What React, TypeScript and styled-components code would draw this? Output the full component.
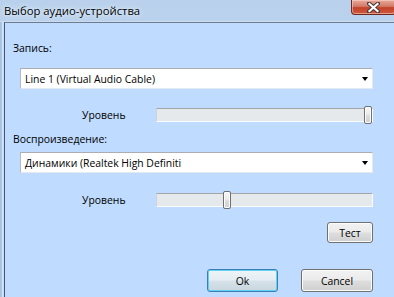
import styled, { createGlobalStyle } from "styled-components";

const GlobalStyle = createGlobalStyle`
  html, body {
    margin: 0;
    padding: 0;
    background: #bfdbff;
  }
  * {
    box-sizing: border-box;
  }
`;

const FONT = `"Open Sans", "Noto Sans", "Liberation Sans", sans-serif`;

const Window = styled.div`
  width: 394px;
  height: 297px;
  display: flex;
  flex-direction: column;
  overflow: hidden;
  background: linear-gradient(to bottom, #b9d1ec 0%, #c4daf1 100%);
  font-family: ${FONT};
`;

const TitleBar = styled.div`
  height: 22px;
  display: flex;
  justify-content: space-between;
  align-items: flex-start;
  border-bottom: 1px solid #c9dcf0;
`;

const Title = styled.div`
  margin: 3px 0 0 4px;
  font-size: 11.3px;
  line-height: 15px;
  color: #000;
  text-shadow: 0 0 6px #e8f2fc, 0 0 3px #e8f2fc;
`;

const CloseButton = styled.div`
  width: 45px;
  height: 15px;
  margin-right: -2px;
  display: flex;
  align-items: center;
  justify-content: center;
  border: 1px solid #6b2a22;
  border-top: none;
  border-radius: 0 0 4px 4px;
  background: linear-gradient(
    to bottom,
    #e9a99c 0%,
    #d47a68 45%,
    #c1412a 55%,
    #cf5a3c 100%
  );
  box-shadow: inset 0 0 0 1px rgba(255, 220, 210, 0.5);
`;

const Body = styled.div`
  flex: 1;
  display: flex;
`;

const FrameEdge = styled.div`
  width: 4px;
  flex-shrink: 0;
  background: linear-gradient(to right, #a5c2e4 0%, #a9c6e6 45%, #d3e5f8 55%, #c5dbf3 100%);
`;

const Client = styled.div`
  flex: 1;
  min-width: 0;
  display: flex;
  flex-direction: column;
  background: #bfdbff;
  border-left: 1px solid #44566f;
  border-top: 1px solid #6d7c8e;
  padding: 18px 21px 0 8px;
  font-size: 10.4px;
  color: #000;
`;

const GroupLabel = styled.div<{ $top: number }>`
  margin-top: ${(p) => p.$top}px;
  line-height: 14px;
  height: 14px;
`;

const Combo = styled.div<{ $top: number }>`
  margin: ${(p) => p.$top}px 0 0 7px;
  height: 21px;
  display: flex;
  align-items: center;
  justify-content: space-between;
  padding: 0 4px 0 4px;
  background: #fff;
  border: 1px solid;
  border-color: #abadb3 #e3e9ef #e3e9ef #b5bac2;
  line-height: 14px;
`;

const Arrow = styled.span`
  width: 0;
  height: 0;
  border-left: 3.5px solid transparent;
  border-right: 3.5px solid transparent;
  border-top: 4px solid #000;
`;

const SliderRow = styled.div<{ $top: number }>`
  margin: ${(p) => p.$top}px 0 0 7px;
  height: 18px;
  display: flex;
  align-items: center;
`;

const SliderLabel = styled.div`
  margin-left: 62px;
  width: 74px;
  line-height: 14px;
`;

const Track = styled.div`
  position: relative;
  width: 217px;
  height: 14px;
  background: #e6e9eb;
  border-top: 1px solid #a3a6a9;
  border-left: 1px solid #d0d3d6;
  border-bottom: 1px solid #fafcfe;
  border-right: 1px solid #fafcfe;
`;

const Thumb = styled.div<{ $pos: number }>`
  position: absolute;
  top: -3px;
  left: ${(p) => p.$pos}px;
  width: 8px;
  height: 18px;
  border: 1px solid #707070;
  border-radius: 2px;
  background: linear-gradient(to bottom, #f7f7f7 0%, #ececec 45%, #dcdcdc 55%, #d0d0d0 100%);
  box-shadow: inset 0 0 0 1px #fcfcfc;
`;

const ButtonRow = styled.div<{ $top: number }>`
  margin-top: ${(p) => p.$top}px;
  display: flex;
  justify-content: flex-end;
  gap: 23px;
`;

const Button = styled.div<{ $w: number; $h: number; $default?: boolean }>`
  width: ${(p) => p.$w}px;
  height: ${(p) => p.$h}px;
  display: flex;
  align-items: center;
  justify-content: center;
  border: 1px solid ${(p) => (p.$default ? "#3c7fb1" : "#707070")};
  border-radius: 3px;
  background: ${(p) =>
    p.$default
      ? "linear-gradient(to bottom, #eef4f8 0%, #e6eef3 45%, #d6e1e8 55%, #c9d6de 100%)"
      : "linear-gradient(to bottom, #f2f2f2 0%, #ebebeb 45%, #dddddd 55%, #cfcfcf 100%)"};
  box-shadow: inset 0 0 0 1px ${(p) => (p.$default ? "#5fd1f5" : "#fcfcfc")};
  line-height: 14px;
`;

const Slider = ({ top, value }: { top: number; value: number }) => (
  <SliderRow $top={top}>
    <SliderLabel>Уровень</SliderLabel>
    <Track>
      <Thumb $pos={Math.round(value * 207)} />
    </Track>
  </SliderRow>
);

const CloseIcon = () => (
  <svg width="13" height="11" viewBox="0 0 13 11">
    <path
      d="M2 1.5 L11 9.5 M11 1.5 L2 9.5"
      stroke="#4a3a3a"
      strokeWidth="4"
      strokeLinecap="square"
    />
    <path
      d="M2.5 2 L10.5 9 M10.5 2 L2.5 9"
      stroke="#fff"
      strokeWidth="2.2"
      strokeLinecap="square"
    />
  </svg>
);

export default function App() {
  return (
    <>
      <GlobalStyle />
      <Window>
        <TitleBar>
          <Title>Выбор аудио-устройства</Title>
          <CloseButton>
            <CloseIcon />
          </CloseButton>
        </TitleBar>
        <Body>
          <FrameEdge />
          <Client>
            <GroupLabel $top={0}>Запись:</GroupLabel>
            <Combo $top={13}>
              <span>Line 1 (Virtual Audio Cable)</span>
              <Arrow />
            </Combo>
            <Slider top={17} value={1} />
            <GroupLabel $top={8}>Воспроизведение:</GroupLabel>
            <Combo $top={6}>
              <span>Динамики (Realtek High Definiti</span>
              <Arrow />
            </Combo>
            <Slider top={18} value={0.32} />
            <ButtonRow $top={13}>
              <Button $w={46} $h={21}>
                Тест
              </Button>
            </ButtonRow>
            <ButtonRow $top={26}>
              <Button $w={71} $h={23} $default>
                Ok
              </Button>
              <Button $w={72} $h={23}>
                Cancel
              </Button>
            </ButtonRow>
          </Client>
        </Body>
      </Window>
    </>
  );
}
